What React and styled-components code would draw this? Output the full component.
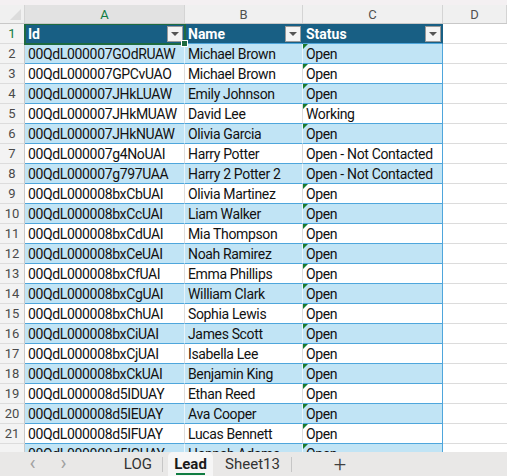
import React from "react";
import styled, { createGlobalStyle, css } from "styled-components";

const GlobalStyle = createGlobalStyle`
    html, body {
        margin: 0;
        padding: 0;
        background: #ffffff;
    }
    body {
        font-family: Roboto, "Liberation Sans", Arial, sans-serif;
    }
`;

const COLS = "25px 160px 118px 140px 1fr";

const leads = [
    ["00QdL000007GOdRUAW", "Michael Brown", "Open"],
    ["00QdL000007GPCvUAO", "Michael Brown", "Open"],
    ["00QdL000007JHkLUAW", "Emily Johnson", "Open"],
    ["00QdL000007JHkMUAW", "David Lee", "Working"],
    ["00QdL000007JHkNUAW", "Olivia Garcia", "Open"],
    ["00QdL000007g4NoUAI", "Harry Potter", "Open - Not Contacted"],
    ["00QdL000007g797UAA", "Harry 2 Potter 2", "Open - Not Contacted"],
    ["00QdL000008bxCbUAI", "Olivia Martinez", "Open"],
    ["00QdL000008bxCcUAI", "Liam Walker", "Open"],
    ["00QdL000008bxCdUAI", "Mia Thompson", "Open"],
    ["00QdL000008bxCeUAI", "Noah Ramirez", "Open"],
    ["00QdL000008bxCfUAI", "Emma Phillips", "Open"],
    ["00QdL000008bxCgUAI", "William Clark", "Open"],
    ["00QdL000008bxChUAI", "Sophia Lewis", "Open"],
    ["00QdL000008bxCiUAI", "James Scott", "Open"],
    ["00QdL000008bxCjUAI", "Isabella Lee", "Open"],
    ["00QdL000008bxCkUAI", "Benjamin King", "Open"],
    ["00QdL000008d5IDUAY", "Ethan Reed", "Open"],
    ["00QdL000008d5IEUAY", "Ava Cooper", "Open"],
    ["00QdL000008d5IFUAY", "Lucas Bennett", "Open"],
    ["00QdL000008d5IGUAY", "Hannah Adams", "Open"]
];

const Page = styled.div`
    width: 507px;
    height: 476px;
    overflow: hidden;
    display: flex;
    flex-direction: column;
    background: #ffffff;
`;

const TopStrip = styled.div`
    height: 5px;
    flex-shrink: 0;
    background: #f4f0f2;
`;

const ColumnBar = styled.div`
    display: grid;
    grid-template-columns: ${COLS};
    height: 19px;
    flex-shrink: 0;
    background: #f0f0f0;
    border-bottom: 1px solid #c8c8c8;
    box-sizing: border-box;
`;

const Corner = styled.div`
    position: relative;
    border-right: 1px solid #d4d4d4;
    &::after {
        content: "";
        position: absolute;
        right: 3px;
        bottom: 3px;
        border-style: solid;
        border-width: 0 0 11px 11px;
        border-color: transparent transparent #dcdcdc transparent;
    }
`;

const ColumnLetter = styled.div`
    display: flex;
    align-items: center;
    justify-content: center;
    font-size: 13px;
    color: ${(p) => (p.$active ? "#107c41" : "#505050")};
    border-right: 1px solid #d4d4d4;
    background: ${(p) => (p.$active ? "#e2e2e2" : "transparent")};
`;

const Grid = styled.div`
    flex: 1;
    min-height: 0;
    overflow: hidden;
    position: relative;
`;

const Row = styled.div`
    display: grid;
    grid-template-columns: ${COLS};
    height: ${(p) => (p.$partial ? 8 : 20)}px;
    overflow: hidden;
    font-size: 14px;
    letter-spacing: -0.35px;
`;

const RowNum = styled.div`
    display: flex;
    align-items: center;
    justify-content: center;
    background: #f3f3f3;
    color: ${(p) => (p.$active ? "#107c41" : "#4a4a4a")};
    font-size: 13px;
    letter-spacing: 0;
    border-right: 1px solid #c8c8c8;
    border-bottom: 1px solid #dcdcdc;
    box-sizing: border-box;
    overflow: hidden;
`;

const Cell = styled.div`
    position: relative;
    display: flex;
    align-items: center;
    height: 20px;
    padding: 1px 3px 0;
    box-sizing: border-box;
    white-space: nowrap;
    overflow: hidden;
    color: #111111;
    border-bottom: 1px solid #4ea6dc;
    border-right: 1px solid ${(p) => (p.$band ? "#e9f5fb" : "#dcdcdc")};
    background: ${(p) => (p.$band ? "#c1e4f5" : "#ffffff")};
    ${(p) =>
        p.$last &&
        css`
            border-right-color: #4ea6dc;
        `}
    ${(p) =>
        p.$header &&
        css`
            background: #185f84;
            color: #ffffff;
            font-weight: 700;
            letter-spacing: 0;
            border-right-color: #185f84;
            border-bottom-color: #4ea6dc;
        `}
    ${(p) =>
        p.$flag &&
        css`
            &::before {
                content: "";
                position: absolute;
                left: 0;
                top: 0;
                border-style: solid;
                border-width: 5px 5px 0 0;
                border-color: #1b7a2e transparent transparent transparent;
            }
        `}
`;

const Blank = styled.div`
    border-bottom: 1px solid #dcdcdc;
`;

const FilterButton = styled.span`
    position: absolute;
    right: 1px;
    top: 2px;
    width: 16px;
    height: 16px;
    box-sizing: border-box;
    background: #f4f4f4;
    border: 1px solid #9a9a9a;
    display: flex;
    align-items: center;
    justify-content: center;
    &::after {
        content: "";
        border-style: solid;
        border-width: 4px 4px 0 4px;
        border-color: #555555 transparent transparent transparent;
    }
`;

const Selection = styled.div`
    position: absolute;
    left: 24px;
    top: -1px;
    width: 162px;
    height: 22px;
    box-sizing: border-box;
    border: 2px solid #1e6b40;
    pointer-events: none;
    &::after {
        content: "";
        position: absolute;
        right: -4px;
        bottom: -4px;
        width: 5px;
        height: 5px;
        background: #1e6b40;
        border: 1px solid #ffffff;
    }
`;

const TabBar = styled.div`
    height: 24px;
    flex-shrink: 0;
    background: #e9e8e7;
    display: flex;
    align-items: stretch;
    font-size: 15px;
    color: #333333;
`;

const NavArrow = styled.span`
    width: 31px;
    display: flex;
    align-items: center;
    justify-content: center;
    color: #a0a0a0;
    font-size: 20px;
    padding-bottom: 2px;
    &:first-child {
        margin-left: 17px;
    }
`;

const Tab = styled.div`
    position: relative;
    display: flex;
    align-items: center;
    justify-content: ${(p) => (p.$end ? "flex-end" : "center")};
    width: ${(p) => p.$width}px;
    margin-left: ${(p) => p.$gap || 0}px;
    padding-right: ${(p) => (p.$end ? 11 : 0)}px;
    box-sizing: border-box;
    font-weight: ${(p) => (p.$active ? 700 : 400)};
    color: ${(p) => (p.$active ? "#1a1a1a" : "#333333")};
    background: ${(p) => (p.$active ? "#f6f6f6" : "transparent")};
    border-radius: ${(p) => (p.$active ? "5px 5px 0 0" : "0")};
    ${(p) =>
        p.$divider &&
        css`
            &::after {
                content: "";
                position: absolute;
                right: 0;
                top: 5px;
                bottom: 4px;
                width: 1px;
                background: #c6c6c6;
            }
        `}
    ${(p) =>
        p.$active &&
        css`
            &::before {
                content: "";
                position: absolute;
                left: 8px;
                right: 8px;
                bottom: 1px;
                height: 2px;
                background: #107c41;
            }
        `}
`;

const AddTab = styled.span`
    width: 96px;
    display: flex;
    align-items: center;
    justify-content: center;
    font-size: 22px;
    font-weight: 300;
    color: #404040;
`;

const App = () => {
    return (
        <Page>
            <GlobalStyle />
            <TopStrip />
            <ColumnBar>
                <Corner />
                <ColumnLetter $active>A</ColumnLetter>
                <ColumnLetter>B</ColumnLetter>
                <ColumnLetter>C</ColumnLetter>
                <ColumnLetter>D</ColumnLetter>
            </ColumnBar>
            <Grid>
                <Row>
                    <RowNum $active>1</RowNum>
                    <Cell $header>
                        Id
                        <FilterButton />
                    </Cell>
                    <Cell $header>
                        Name
                        <FilterButton />
                    </Cell>
                    <Cell $header $last>
                        Status
                        <FilterButton />
                    </Cell>
                    <Blank />
                </Row>
                {leads.map(([id, name, status], i) => {
                    const band = i % 2 === 0;
                    const partial = i === leads.length - 1;
                    return (
                        <Row key={id} $partial={partial}>
                            <RowNum>{partial ? "" : i + 2}</RowNum>
                            <Cell $band={band}>{id}</Cell>
                            <Cell $band={band}>{name}</Cell>
                            <Cell $band={band} $last $flag={status !== "Open - Not Contacted"}>
                                {status}
                            </Cell>
                            <Blank />
                        </Row>
                    );
                })}
                <Selection />
            </Grid>
            <TabBar>
                <NavArrow>&#x2039;</NavArrow>
                <NavArrow>&#x203A;</NavArrow>
                <Tab $width={84} $divider $end>
                    LOG
                </Tab>
                <Tab $width={45} $gap={5} $active>
                    Lead
                </Tab>
                <Tab $width={79} $divider>
                    Sheet13
                </Tab>
                <AddTab>+</AddTab>
            </TabBar>
        </Page>
    );
};

export default App;
